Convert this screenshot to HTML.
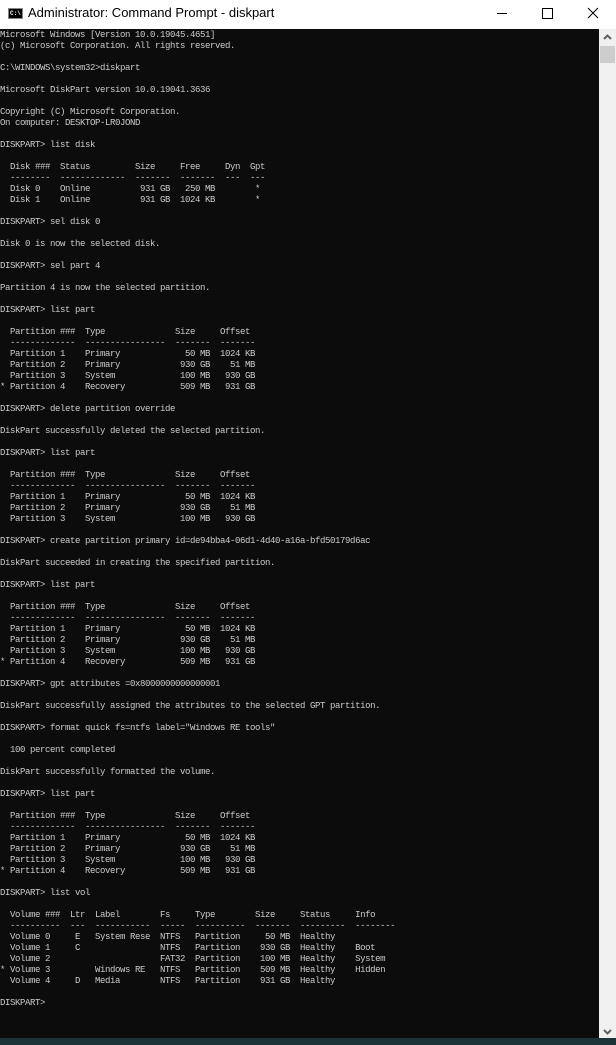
<!DOCTYPE html>
<html><head><meta charset="utf-8"><style>
html,body{margin:0;padding:0;width:616px;height:1045px;overflow:hidden;background:#0c0c0c}
.title{position:absolute;left:0;top:0;width:616px;height:29px;background:#fff}
.title .t{position:absolute;left:28px;top:5px;font:13px "Liberation Sans",sans-serif;color:#000}
.icon{position:absolute;left:8px;top:8px;width:15px;height:11px;background:#000;border:1px solid #888;box-sizing:border-box}
.icon span{position:absolute;left:1px;top:1px;font:bold 6px "Liberation Mono",monospace;color:#fff;line-height:7px}
.term{position:absolute;left:0;top:29px;width:599px;height:1009px;background:#0c0c0c}
pre{position:absolute;left:0;top:1px;margin:0;font:9px/11px "Liberation Mono",monospace;letter-spacing:-0.4px;color:#cccccc}
.sb{position:absolute;left:599px;top:29px;width:17px;height:1009px;background:#f0f0f0}
.thumb{position:absolute;left:1px;top:17px;width:15px;height:17px;background:#cdcdcd}
.task{position:absolute;left:0;top:1038px;width:616px;height:7px;background:#1d3236}
</style></head><body>
<div class="title"><div class="icon"><span>C:\</span></div><div class="t">Administrator: Command Prompt - diskpart</div>
<svg style="position:absolute;left:490px;top:0" width="126" height="29">
<line x1="7" y1="13.5" x2="17" y2="13.5" stroke="#000" stroke-width="1"/>
<rect x="52.5" y="8.5" width="10" height="10" fill="none" stroke="#000"/>
<path d="M98 8 L108 18 M108 8 L98 18" stroke="#000" stroke-width="1"/>
</svg></div>
<div class="term"><pre>Microsoft Windows [Version 10.0.19045.4651]
(c) Microsoft Corporation. All rights reserved.

C:\WINDOWS\system32>diskpart

Microsoft DiskPart version 10.0.19041.3636

Copyright (C) Microsoft Corporation.
On computer: DESKTOP-LR0JOND

DISKPART> list disk

  Disk ###  Status         Size     Free     Dyn  Gpt
  --------  -------------  -------  -------  ---  ---
  Disk 0    Online          931 GB   250 MB        *
  Disk 1    Online          931 GB  1024 KB        *

DISKPART> sel disk 0

Disk 0 is now the selected disk.

DISKPART> sel part 4

Partition 4 is now the selected partition.

DISKPART> list part

  Partition ###  Type              Size     Offset
  -------------  ----------------  -------  -------
  Partition 1    Primary             50 MB  1024 KB
  Partition 2    Primary            930 GB    51 MB
  Partition 3    System             100 MB   930 GB
* Partition 4    Recovery           509 MB   931 GB

DISKPART> delete partition override

DiskPart successfully deleted the selected partition.

DISKPART> list part

  Partition ###  Type              Size     Offset
  -------------  ----------------  -------  -------
  Partition 1    Primary             50 MB  1024 KB
  Partition 2    Primary            930 GB    51 MB
  Partition 3    System             100 MB   930 GB

DISKPART> create partition primary id=de94bba4-06d1-4d40-a16a-bfd50179d6ac

DiskPart succeeded in creating the specified partition.

DISKPART> list part

  Partition ###  Type              Size     Offset
  -------------  ----------------  -------  -------
  Partition 1    Primary             50 MB  1024 KB
  Partition 2    Primary            930 GB    51 MB
  Partition 3    System             100 MB   930 GB
* Partition 4    Recovery           509 MB   931 GB

DISKPART> gpt attributes =0x8000000000000001

DiskPart successfully assigned the attributes to the selected GPT partition.

DISKPART> format quick fs=ntfs label="Windows RE tools"

  100 percent completed

DiskPart successfully formatted the volume.

DISKPART> list part

  Partition ###  Type              Size     Offset
  -------------  ----------------  -------  -------
  Partition 1    Primary             50 MB  1024 KB
  Partition 2    Primary            930 GB    51 MB
  Partition 3    System             100 MB   930 GB
* Partition 4    Recovery           509 MB   931 GB

DISKPART> list vol

  Volume ###  Ltr  Label        Fs     Type        Size     Status     Info
  ----------  ---  -----------  -----  ----------  -------  ---------  --------
  Volume 0     E   System Rese  NTFS   Partition     50 MB  Healthy
  Volume 1     C                NTFS   Partition    930 GB  Healthy    Boot
  Volume 2                      FAT32  Partition    100 MB  Healthy    System
* Volume 3         Windows RE   NTFS   Partition    509 MB  Healthy    Hidden
  Volume 4     D   Media        NTFS   Partition    931 GB  Healthy

DISKPART></pre></div>
<div class="sb"><svg style="position:absolute;left:4px;top:5px" width="9" height="6"><path d="M1 5 L4.5 1.5 L8 5" stroke="#606060" stroke-width="2" fill="none"/></svg><div class="thumb"></div>
<svg style="position:absolute;left:4px;top:1000px" width="9" height="6"><path d="M1 1 L4.5 4.5 L8 1" stroke="#606060" stroke-width="2" fill="none"/></svg></div>
<div class="task"></div>
</body></html>
